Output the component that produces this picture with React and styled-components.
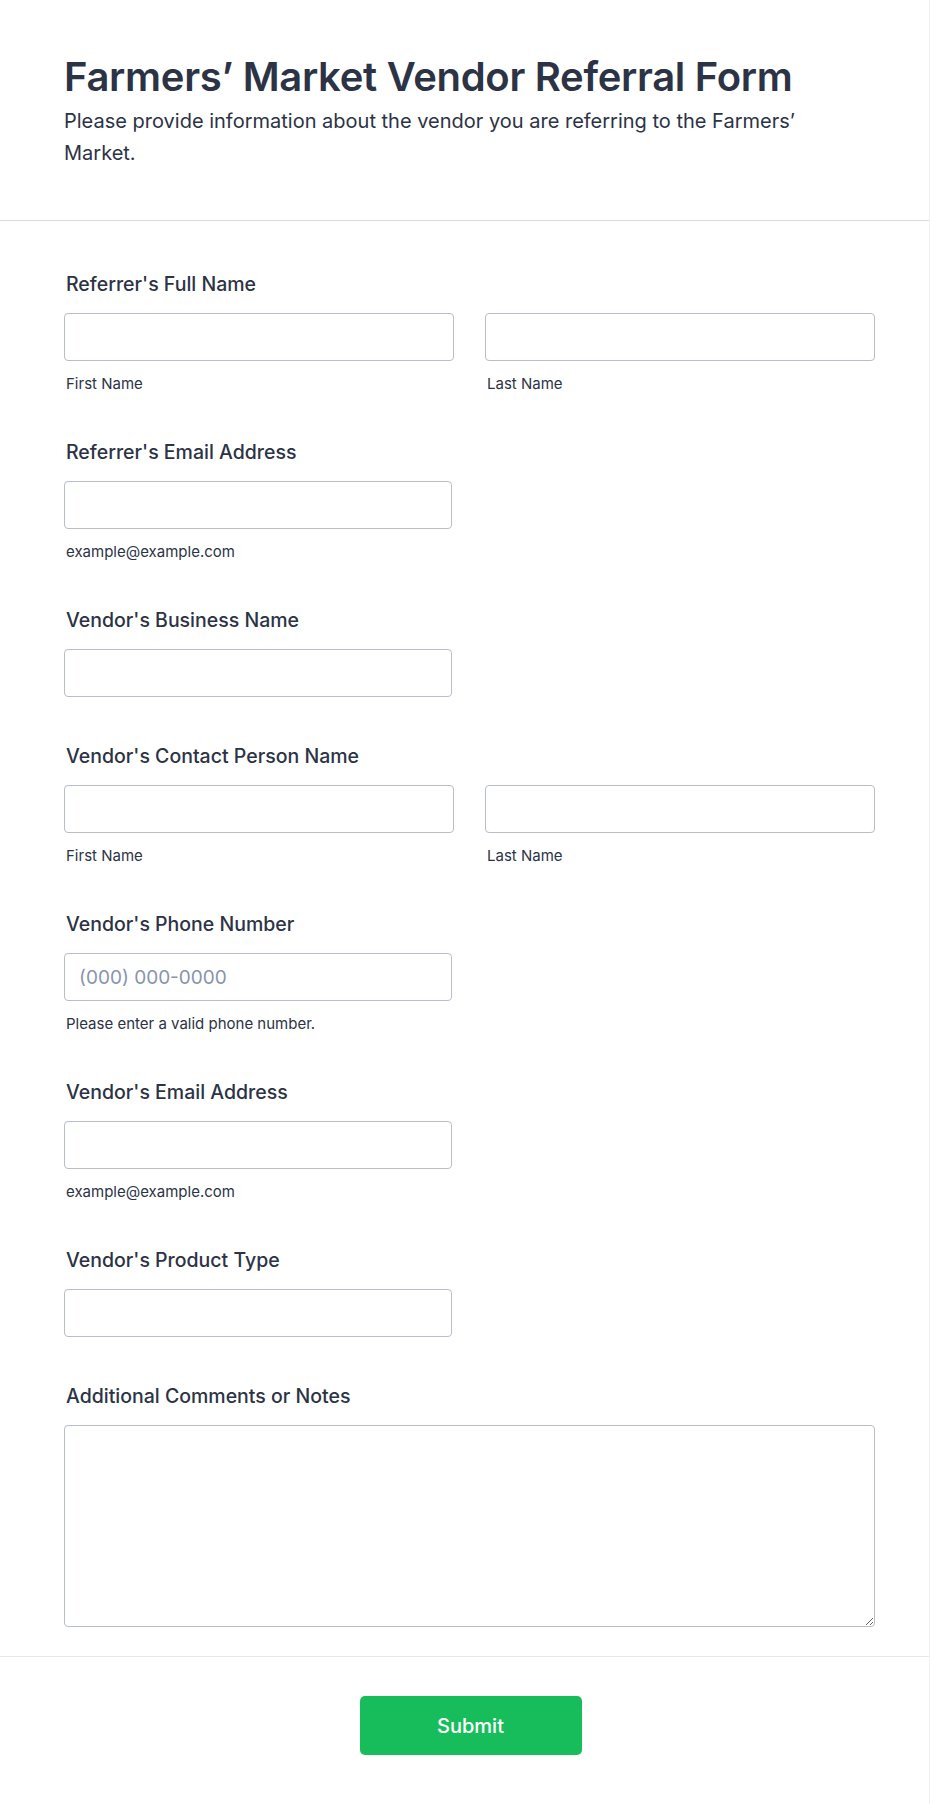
import React from "react";
import styled, { createGlobalStyle } from "styled-components";

const GlobalStyle = createGlobalStyle`
  html, body { margin: 0; padding: 0; background: #ffffff; }
  body { font-family: Inter, "Noto Sans", "Liberation Sans", sans-serif; color: #2c3345; }
  * { box-sizing: border-box; }
`;

const Page = styled.div`
  width: 930px;
  min-height: 1804px;
  border-right: 1px solid #eef0f6;
  background: #fff;
`;

const Header = styled.header`
  padding: 53px 64px 51px 64px;
  border-bottom: 1px solid #d8dbe6;
`;

const Title = styled.h1`
  margin: 0;
  font-size: 40px;
  line-height: 48px;
  font-weight: 600;
  color: #2c3345;
  letter-spacing: -0.3px;
`;

const Subtitle = styled.p`
  margin: 4px 0 0 0;
  max-width: 780px;
  font-size: 20px;
  line-height: 32px;
  font-weight: 400;
  color: #2c3345;
`;

const Fields = styled.div`
  padding: 51px 55px 29px 64px;
  display: flex;
  flex-direction: column;
  gap: 47px;
`;

const Field = styled.div`
  display: flex;
  flex-direction: column;
`;

const Label = styled.label`
  display: block;
  padding-left: 2px;
  font-size: 19.5px;
  line-height: 24px;
  font-weight: 500;
  color: #2c3345;
  margin-bottom: 17px;
`;

const Row = styled.div`
  display: grid;
  grid-template-columns: ${(p) => (p.$cols === 2 ? "390px 390px" : "388px")};
  column-gap: 31px;
`;

const Cell = styled.div`
  display: flex;
  flex-direction: column;
`;

const Input = styled.input`
  display: block;
  width: 100%;
  height: 48px;
  padding: 0 14px;
  border: 1px solid #b8bdc9;
  border-radius: 4px;
  background: #fff;
  font-family: Inter, "Noto Sans", sans-serif;
  font-size: 19px;
  color: #2c3345;
  outline: none;
  &::placeholder { color: #8894ab; opacity: 1; }
`;

const TextArea = styled.textarea`
  display: block;
  width: 811px;
  height: 202px;
  padding: 10px 14px;
  border: 1px solid #b8bdc9;
  border-radius: 4px;
  background: #fff;
  font-family: Inter, "Noto Sans", sans-serif;
  font-size: 18px;
  color: #2c3345;
  resize: vertical;
  outline: none;
`;

const SubLabel = styled.span`
  display: block;
  margin-top: 14px;
  padding-left: 2px;
  font-size: 15px;
  line-height: 18px;
  color: #2c3345;
`;

const Footer = styled.div`
  border-top: 1px solid #e6e8f0;
  padding: 39px 52px 47px 64px;
  display: flex;
  justify-content: center;
`;

const SubmitButton = styled.button`
  width: 222px;
  height: 59px;
  border: none;
  border-radius: 5px;
  background: #18bd5b;
  color: #fff;
  font-family: Inter, "Noto Sans", sans-serif;
  font-size: 20px;
  font-weight: 500;
  cursor: pointer;
`;

function TextField({ label, cols = 1, subs = [], placeholder }) {
  const cells = cols === 2 ? [0, 1] : [0];
  return (
    <Field>
      <Label>{label}</Label>
      <Row $cols={cols}>
        {cells.map((i) => (
          <Cell key={i}>
            <Input type="text" placeholder={placeholder || ""} />
            {subs[i] && <SubLabel>{subs[i]}</SubLabel>}
          </Cell>
        ))}
      </Row>
    </Field>
  );
}

export default function App() {
  return (
    <>
      <GlobalStyle />
      <Page>
        <Header>
          <Title>Farmers’ Market Vendor Referral Form</Title>
          <Subtitle>
            Please provide information about the vendor you are referring to the Farmers’ Market.
          </Subtitle>
        </Header>
        <Fields>
          <TextField label="Referrer's Full Name" cols={2} subs={["First Name", "Last Name"]} />
          <TextField label="Referrer's Email Address" subs={["example@example.com"]} />
          <TextField label="Vendor's Business Name" />
          <TextField label="Vendor's Contact Person Name" cols={2} subs={["First Name", "Last Name"]} />
          <TextField label="Vendor's Phone Number" placeholder="(000) 000-0000" subs={["Please enter a valid phone number."]} />
          <TextField label="Vendor's Email Address" subs={["example@example.com"]} />
          <TextField label="Vendor's Product Type" />
          <Field>
            <Label>Additional Comments or Notes</Label>
            <TextArea />
          </Field>
        </Fields>
        <Footer>
          <SubmitButton type="button">Submit</SubmitButton>
        </Footer>
      </Page>
    </>
  );
}
